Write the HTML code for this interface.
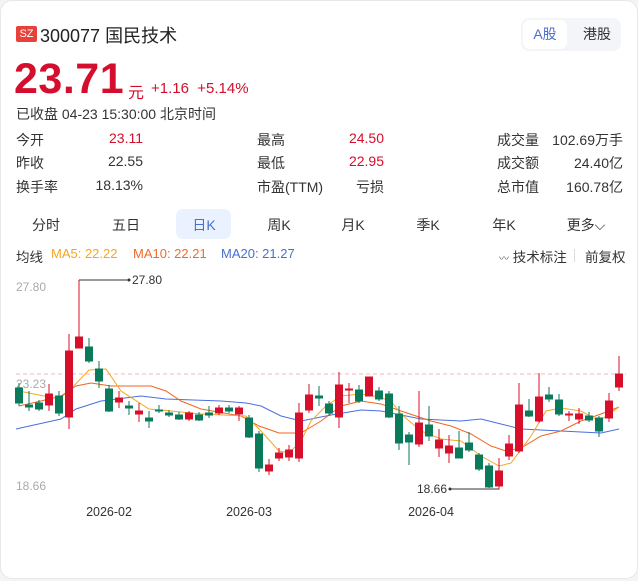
<!DOCTYPE html><html><head><meta charset="utf-8"><style>
body{margin:0;width:638px;height:580px;background:#f3f4f6;font-family:"Liberation Sans","Noto Sans CJK SC",sans-serif;color:#333;overflow:hidden}
.card{position:absolute;left:0;top:0;width:636px;height:577px;background:#fff;border:1px solid #e8e8e8;border-radius:12px}
.a{position:absolute;white-space:nowrap}
.red{color:#d40e2c}
.lbl{font-size:14px;color:#333}
.v{font-size:14px;text-align:right;width:80px}
.tab{position:absolute;top:214px;font-size:14px;color:#333;transform:translateX(-50%)}
</style></head><body><div class="card">
<div class="a" style="left:15px;top:25px;width:21px;height:16px;background:#e8413a;border-radius:2px;color:#fff;font-size:11px;line-height:16px;text-align:center">SZ</div>
<div class="a" style="left:39px;top:21px;font-size:18px;color:#222">300077 国民技术</div>
<div class="a" style="left:520px;top:17px;width:100px;height:33px;background:#f3f5f8;border-radius:8px"></div>
<div class="a" style="left:522px;top:19px;width:44px;height:29px;background:#fff;border-radius:7px;color:#4a6fd0;font-size:14px;line-height:29px;text-align:center">A股</div>
<div class="a" style="left:574px;top:19px;width:44px;height:29px;color:#333;font-size:14px;line-height:29px;text-align:center">港股</div>
<div class="a red" style="left:13px;top:54px;font-size:43px;font-weight:bold;letter-spacing:0.5px">23.71</div>
<div class="a red" style="left:127px;top:78px;font-size:16px">元</div>
<div class="a red" style="left:150px;top:79px;font-size:15px">+1.16&nbsp; +5.14%</div>
<div class="a" style="left:15px;top:103px;font-size:14px;color:#333">已收盘 04-23 15:30:00 北京时间</div>

<div class="a lbl" style="left:15px;top:129px">今开</div><div class="a v red" style="left:62px;top:129px">23.11</div>
<div class="a lbl" style="left:15px;top:152px">昨收</div><div class="a v" style="left:62px;top:152px">22.55</div>
<div class="a lbl" style="left:15px;top:176px">换手率</div><div class="a v" style="left:62px;top:176px">18.13%</div>
<div class="a lbl" style="left:256px;top:129px">最高</div><div class="a v red" style="left:303px;top:129px">24.50</div>
<div class="a lbl" style="left:256px;top:152px">最低</div><div class="a v red" style="left:303px;top:152px">22.95</div>
<div class="a lbl" style="left:256px;top:176px">市盈(TTM)</div><div class="a v" style="left:303px;top:176px">亏损</div>
<div class="a lbl" style="left:496px;top:129px">成交量</div><div class="a v" style="left:522px;top:129px;width:100px">102.69万手</div>
<div class="a lbl" style="left:496px;top:152px">成交额</div><div class="a v" style="left:542px;top:152px">24.40亿</div>
<div class="a lbl" style="left:496px;top:176px">总市值</div><div class="a v" style="left:542px;top:176px">160.78亿</div>

<div class="a" style="left:175px;top:208px;width:55px;height:30px;background:#eaf2ff;border-radius:7px"></div>
<div class="tab" style="left:45px">分时</div><div class="tab" style="left:125px">五日</div>
<div class="tab" style="left:203px;color:#4a6fd0">日K</div><div class="tab" style="left:278px">周K</div>
<div class="tab" style="left:352px">月K</div><div class="tab" style="left:427px">季K</div>
<div class="tab" style="left:503px">年K</div><div class="tab" style="left:585px">更多⌵</div>

<div class="a" style="left:15px;top:245px;font-size:13.5px;color:#333">均线</div>
<div class="a" style="left:50px;top:245px;font-size:13px;color:#f5a623">MA5: 22.22</div>
<div class="a" style="left:132px;top:245px;font-size:13px;color:#f26a2a">MA10: 22.21</div>
<div class="a" style="left:220px;top:245px;font-size:13px;color:#4a6fd0">MA20: 21.27</div>
<div class="a" style="left:498px;top:245px;font-size:13.5px;color:#333"><span style="font-size:10px;color:#666">〰</span> 技术标注</div>
<div class="a" style="left:573px;top:248px;width:1px;height:13px;background:#ddd"></div>
<div class="a" style="left:584px;top:245px;font-size:13.5px;color:#333">前复权</div>

<svg class="a" style="left:0;top:0" width="638" height="580" font-family="Liberation Sans, sans-serif">
<line x1="15" y1="373" x2="625" y2="373" stroke="#f4b4b4" stroke-dasharray="4,3" stroke-width="1"/>
<text x="15" y="290" font-size="12" fill="#aaa">27.80</text>
<text x="15" y="387" font-size="12" fill="#aaa">23.23</text>
<text x="15" y="489" font-size="12" fill="#aaa">18.66</text>
<text x="108" y="515" font-size="12.5" fill="#333" text-anchor="middle">2026-02</text>
<text x="248" y="515" font-size="12.5" fill="#333" text-anchor="middle">2026-03</text>
<text x="430" y="515" font-size="12.5" fill="#333" text-anchor="middle">2026-04</text>
<polyline points="78,279 128,279" stroke="#333" fill="none"/><circle cx="128" cy="279" r="1.5" fill="#333"/>
<text x="131" y="283" font-size="12" fill="#333">27.80</text>
<polyline points="449,488 498,488 498,485" stroke="#333" fill="none"/><circle cx="449" cy="488" r="1.5" fill="#333"/>
<text x="446" y="492" font-size="12" fill="#333" text-anchor="end">18.66</text>
<g stroke-width="1" fill="none">
<polyline stroke="#4a6fe0" points="15,428 60,418 75,408 100,400 140,395 165,398 220,400 245,402 260,405 280,415 300,420 330,414 360,409 380,410 420,418 460,420 480,418 500,423 520,428 560,430 600,432 618,428"/>
<polyline stroke="#f26522" points="18,405 40,400 60,395 75,385 90,382 110,385 150,385 165,390 180,400 200,408 240,415 258,425 278,432 300,432 320,420 340,405 360,400 380,403 400,410 430,420 450,425 470,433 490,445 505,450 520,447 540,435 560,430 580,420 600,413 618,406"/>
<polyline stroke="#f5a623" points="18,390 28,392 58,398 68,390 88,369 105,368 120,390 148,408 170,410 200,413 245,415 260,430 278,450 288,452 300,440 310,420 325,405 340,395 360,393 378,396 390,400 400,413 420,430 440,438 460,440 480,455 498,465 510,462 530,435 545,410 560,407 580,410 598,420 618,406"/>
</g>
</svg>
<svg class="a" style="left:0;top:0" width="638" height="580">
<g stroke-width="1">
<g fill="#0b7a5a" stroke="#0b7a5a">
<line x1="18" y1="382" x2="18" y2="405"/><rect x="14.5" y="387" width="7" height="15"/>
<line x1="28" y1="390" x2="28" y2="410"/><rect x="24.5" y="404" width="7" height="2"/>
<line x1="38" y1="399" x2="38" y2="410"/><rect x="34.5" y="402" width="7" height="6"/>
<line x1="58" y1="390" x2="58" y2="415"/><rect x="54.5" y="395" width="7" height="17"/>
<line x1="88" y1="337" x2="88" y2="362"/><rect x="84.5" y="346" width="7" height="14"/>
<line x1="98" y1="360" x2="98" y2="387"/><rect x="94.5" y="368" width="7" height="12"/>
<line x1="108" y1="384" x2="108" y2="411"/><rect x="104.5" y="388" width="7" height="22"/>
<line x1="128" y1="400" x2="128" y2="414"/><rect x="124.5" y="405" width="7" height="2"/>
<line x1="148" y1="410" x2="148" y2="427"/><rect x="144.5" y="417" width="7" height="3"/>
<line x1="158" y1="404" x2="158" y2="412"/><rect x="154.5" y="409" width="7" height="1"/>
<line x1="168" y1="409" x2="168" y2="416"/><rect x="164.5" y="412" width="7" height="2"/>
<line x1="178" y1="411" x2="178" y2="419"/><rect x="174.5" y="414" width="7" height="4"/>
<line x1="198" y1="411" x2="198" y2="420"/><rect x="194.5" y="414" width="7" height="5"/>
<line x1="208" y1="405" x2="208" y2="417"/><rect x="204.5" y="412" width="7" height="2"/>
<line x1="228" y1="404" x2="228" y2="412"/><rect x="224.5" y="407" width="7" height="3"/>
<line x1="248" y1="414" x2="248" y2="437"/><rect x="244.5" y="417" width="7" height="19"/>
<line x1="258" y1="430" x2="258" y2="471"/><rect x="254.5" y="433" width="7" height="34"/>
<line x1="318" y1="385" x2="318" y2="405"/><rect x="314.5" y="395" width="7" height="2"/>
<line x1="328" y1="400" x2="328" y2="415"/><rect x="324.5" y="403" width="7" height="9"/>
<line x1="358" y1="384" x2="358" y2="402"/><rect x="354.5" y="389" width="7" height="11"/>
<line x1="378" y1="386" x2="378" y2="400"/><rect x="374.5" y="390" width="7" height="8"/>
<line x1="388" y1="390" x2="388" y2="417"/><rect x="384.5" y="393" width="7" height="23"/>
<line x1="398" y1="405" x2="398" y2="449"/><rect x="394.5" y="413" width="7" height="29"/>
<line x1="408" y1="431" x2="408" y2="464"/><rect x="404.5" y="434" width="7" height="7"/>
<line x1="428" y1="405" x2="428" y2="440"/><rect x="424.5" y="424" width="7" height="11"/>
<line x1="458" y1="430" x2="458" y2="457"/><rect x="454.5" y="447" width="7" height="10"/>
<line x1="468" y1="431" x2="468" y2="451"/><rect x="464.5" y="442" width="7" height="7"/>
<line x1="478" y1="452" x2="478" y2="470"/><rect x="474.5" y="454" width="7" height="14"/>
<line x1="488" y1="462" x2="488" y2="487"/><rect x="484.5" y="465" width="7" height="21"/>
<line x1="528" y1="398" x2="528" y2="416"/><rect x="524.5" y="410" width="7" height="5"/>
<line x1="548" y1="386" x2="548" y2="401"/><rect x="544.5" y="394" width="7" height="4"/>
<line x1="558" y1="393" x2="558" y2="415"/><rect x="554.5" y="399" width="7" height="14"/>
<line x1="588" y1="411" x2="588" y2="421"/><rect x="584.5" y="415" width="7" height="4"/>
<line x1="598" y1="415" x2="598" y2="436"/><rect x="594.5" y="417" width="7" height="13"/>
</g>
<g fill="#d80f2a" stroke="#d80f2a">
<line x1="48" y1="383" x2="48" y2="410"/><rect x="44.5" y="393" width="7" height="11"/>
<line x1="68" y1="333" x2="68" y2="428"/><rect x="64.5" y="350" width="7" height="66"/>
<line x1="78" y1="279" x2="78" y2="347"/><rect x="74.5" y="336" width="7" height="11"/>
<line x1="118" y1="390" x2="118" y2="407"/><rect x="114.5" y="397" width="7" height="4"/>
<line x1="138" y1="402" x2="138" y2="421"/><rect x="134.5" y="410" width="7" height="3"/>
<line x1="188" y1="410" x2="188" y2="420"/><rect x="184.5" y="412" width="7" height="6"/>
<line x1="218" y1="404" x2="218" y2="414"/><rect x="214.5" y="407" width="7" height="5"/>
<line x1="238" y1="405" x2="238" y2="420"/><rect x="234.5" y="407" width="7" height="6"/>
<line x1="268" y1="458" x2="268" y2="474"/><rect x="264.5" y="464" width="7" height="6"/>
<line x1="278" y1="447" x2="278" y2="460"/><rect x="274.5" y="452" width="7" height="5"/>
<line x1="288" y1="444" x2="288" y2="460"/><rect x="284.5" y="449" width="7" height="7"/>
<line x1="298" y1="402" x2="298" y2="461"/><rect x="294.5" y="412" width="7" height="45"/>
<line x1="308" y1="383" x2="308" y2="412"/><rect x="304.5" y="394" width="7" height="15"/>
<line x1="338" y1="371" x2="338" y2="427"/><rect x="334.5" y="384" width="7" height="32"/>
<line x1="348" y1="382" x2="348" y2="402"/><rect x="344.5" y="388" width="7" height="1"/>
<line x1="368" y1="376" x2="368" y2="395"/><rect x="364.5" y="376" width="7" height="19"/>
<line x1="418" y1="390" x2="418" y2="446"/><rect x="414.5" y="422" width="7" height="21"/>
<line x1="438" y1="428" x2="438" y2="456"/><rect x="434.5" y="439" width="7" height="8"/>
<line x1="448" y1="434" x2="448" y2="462"/><rect x="444.5" y="445" width="7" height="7"/>
<line x1="498" y1="457" x2="498" y2="488"/><rect x="494.5" y="470" width="7" height="15"/>
<line x1="508" y1="434" x2="508" y2="459"/><rect x="504.5" y="443" width="7" height="12"/>
<line x1="518" y1="382" x2="518" y2="452"/><rect x="514.5" y="404" width="7" height="46"/>
<line x1="538" y1="372" x2="538" y2="422"/><rect x="534.5" y="396" width="7" height="24"/>
<line x1="568" y1="410" x2="568" y2="420"/><rect x="564.5" y="413" width="7" height="1"/>
<line x1="578" y1="407" x2="578" y2="423"/><rect x="574.5" y="413" width="7" height="5"/>
<line x1="608" y1="392" x2="608" y2="421"/><rect x="604.5" y="400" width="7" height="17"/>
<line x1="618" y1="355" x2="618" y2="390"/><rect x="614.5" y="373" width="7" height="13"/>
</g></g></svg>
</div></body></html>
